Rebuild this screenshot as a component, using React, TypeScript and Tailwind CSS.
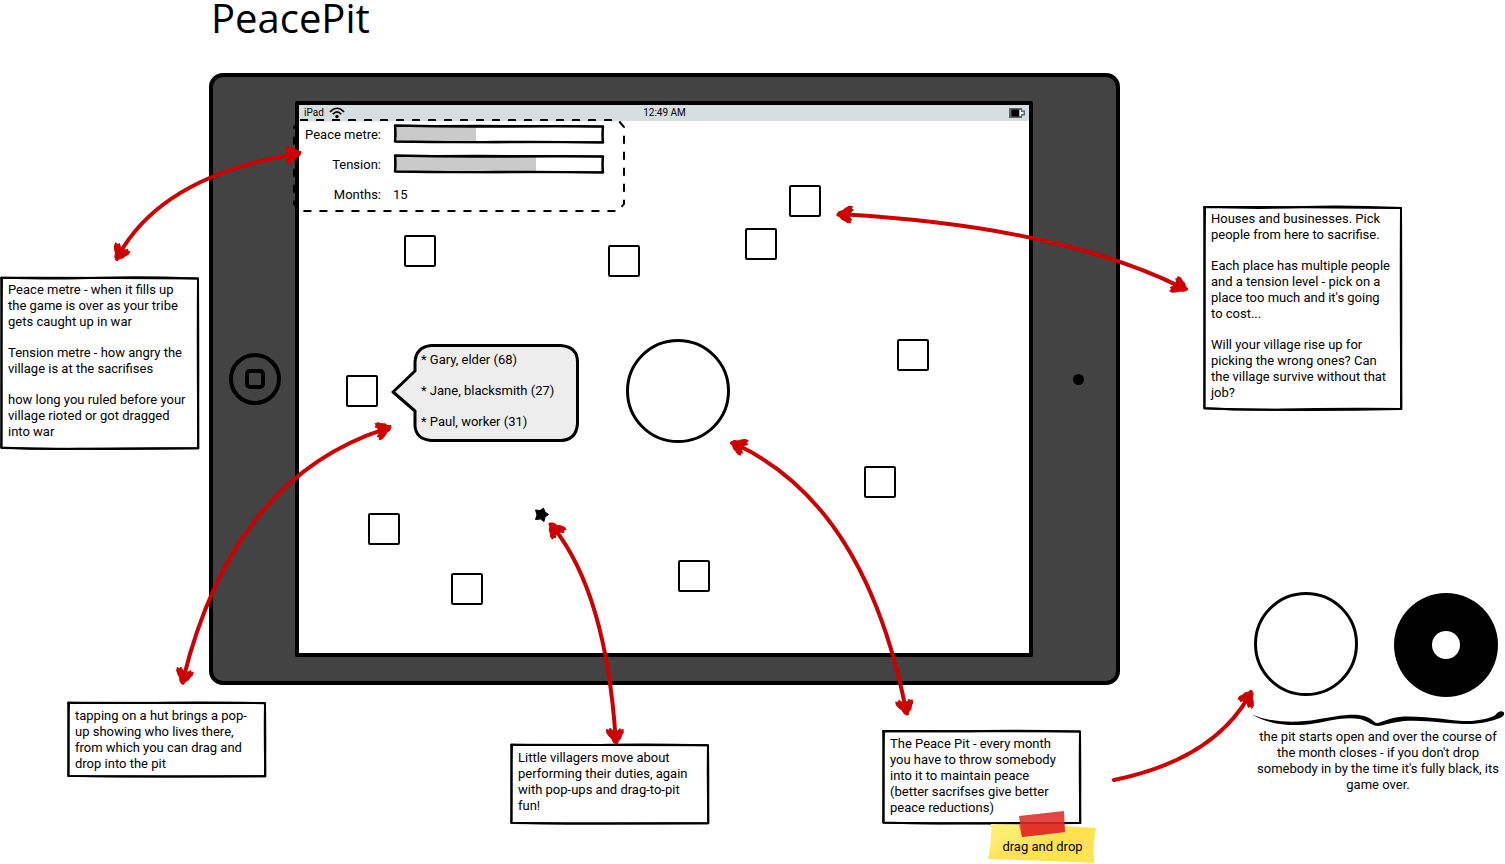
import type { ReactNode } from "react";

type Point = [number, number];

function RoughFrame({ fill = "none" }: { fill?: string }) {
  return (
    <svg
      className="absolute inset-0 h-full w-full overflow-visible"
      viewBox="0 0 100 100"
      preserveAspectRatio="none"
      fill="none"
      stroke="#000"
      strokeLinejoin="round"
      strokeLinecap="round"
      aria-hidden="true"
    >
      <path
        d="M.6 1 Q30 1.8 50 1 T99 1.5 Q98.7 45 99.2 99 Q60 98.8 40 99.3 T.6 98.5 Q1 60 .6 1Z"
        fill={fill}
        strokeWidth="2"
        vectorEffect="non-scaling-stroke"
      />
      <path
        d="M.6 1 Q45 .8 99 1.500 Q99.300 60 99 99 Q50 100 .8 98.800 Q.5 40 1 1"
        strokeWidth="2"
        vectorEffect="non-scaling-stroke"
      />
    </svg>
  );
}

function Lines({ paragraphs }: { paragraphs: string[][] }) {
  return (
    <div className="relative flex flex-col gap-[15px]">
      {paragraphs.map((lines, i) => (
        <p key={i}>
          {lines.map((line) => (
            <span key={line} className="block whitespace-nowrap">
              {line}
            </span>
          ))}
        </p>
      ))}
    </div>
  );
}

function Note({ place, paragraphs }: { place: string; paragraphs: string[][] }) {
  return (
    <section className={`absolute w-[200px] px-2 pt-[6px] ${place}`}>
      <RoughFrame fill="#fff" />
      <Lines paragraphs={paragraphs} />
    </section>
  );
}

function Meter({ label, value }: { label: string; value: number }) {
  return (
    <div
      role="progressbar"
      aria-label={label}
      aria-valuenow={value}
      className="relative h-5 w-[212px] bg-white p-[2px]"
    >
      <div className="h-full bg-[#cacaca]" style={{ width: `${value}%` }} />
      <svg
        className="absolute inset-0 h-full w-full"
        viewBox="0 0 212 20"
        fill="none"
        stroke="#000"
        strokeWidth="2.4"
        strokeLinejoin="round"
        aria-hidden="true"
      >
        <path d="M2 1.5 Q55 3 110 2.5 T210 2.5 Q209 10 210 18.500 Q150 17.500 105 18 T2 17.500 Q3 9 2 1.500Z" />
        <path d="M2 2 Q105 1 210 2.500 L209.500 18 Q105 19 2 17.500Z" strokeWidth="1.500" />
      </svg>
    </div>
  );
}

const houses: Point[] = [
  [105, 130],
  [309, 140],
  [490, 80],
  [446, 123],
  [47, 270],
  [598, 234],
  [565, 361],
  [69, 408],
  [152, 468],
  [379, 455],
];

function StatusBar() {
  return (
    <div className="grid h-4 grid-cols-3 items-center bg-[#d7dee1] pr-1 pl-[5px] text-[10px] leading-4">
      <span className="flex items-center gap-[5px]">
        iPad
        <svg width="16" height="12" viewBox="0 0 16 12" fill="none" stroke="#000" strokeWidth="1.700" aria-hidden="true">
          <path d="M1 5 Q8 -2.500 15 5" />
          <path d="M3.800 7.200 Q8 2.500 12.200 7.200" />
          <circle cx="8" cy="9.500" r="1.700" fill="#000" stroke="none" />
        </svg>
      </span>
      <span className="text-center">12:49 AM</span>
      <svg className="justify-self-end" width="16" height="10" viewBox="0 0 16 10" aria-hidden="true">
        <path d="M0 0h13v2.500h3v5h-3v2.500H0z" fill="#5f6568" />
        <path d="M2.500 1.500h7.500v7h-7.500z" fill="#000" />
        <path d="M10.500 2h1.500v2h2.500v2h-2.500v2h-1.500z" fill="#fff" />
      </svg>
    </div>
  );
}

function Popup() {
  return (
    <div className="absolute top-[239px] left-[92px] h-[98px] w-[188px] pt-[8px] pl-[30px]">
      <svg className="absolute inset-0 h-full w-full overflow-visible" viewBox="0 0 188 98" aria-hidden="true">
        <path
          d="M40 1.500H170Q186.500 3 186.500 18V80Q185 96 170 96.500H40Q25 95 24 82V67L2 48L24 27V18Q25 3 40 1.500Z"
          fill="#ededed"
          stroke="#000"
          strokeWidth="3"
          strokeLinejoin="round"
        />
      </svg>
      <Lines paragraphs={[["* Gary, elder (68)"], ["* Jane, blacksmith (27)"], ["* Paul, worker (31)"]]} />
    </div>
  );
}

function Tablet() {
  return (
    <main className="absolute top-[73px] left-[209px] flex w-[911px] rounded-[14px] border-4 border-black bg-[#434343] py-6">
      <div className="flex w-[82px] items-center justify-center pl-[2px]">
        <button
          aria-label="Home"
          className="flex h-[52px] w-[52px] items-center justify-center rounded-full border-4 border-black"
        >
          <span className="h-5 w-5 rounded-[5px] border-4 border-black" />
        </button>
      </div>
      <div className="flex-1 rounded-xs border-4 border-black bg-white">
        <StatusBar />
        <div className="relative h-[532px]">
          <dl className="grid grid-cols-[82px_1fr] gap-x-3 gap-y-1">
            <dt className="flex h-[26px] items-center justify-end pt-[2px] whitespace-nowrap">Peace metre:</dt>
            <dd className="flex items-center">
              <Meter label="Peace metre" value={39} />
            </dd>
            <dt className="flex h-[26px] items-center justify-end pt-[2px]">Tension:</dt>
            <dd className="flex items-center">
              <Meter label="Tension" value={68} />
            </dd>
            <dt className="flex h-[26px] items-center justify-end pt-[2px]">Months:</dt>
            <dd className="flex items-center pt-[2px]">15</dd>
          </dl>
          {/* Village map: each hut sits at its own spot */}
          <div className="absolute -top-4 left-0">
            {houses.map(([x, y], i) => (
              <button
                key={i}
                aria-label={`House ${i + 1}`}
                className="absolute h-8 w-8 rounded-[2px] border-2 border-black bg-white"
                style={{ left: x, top: y }}
              />
            ))}
            <div className="absolute top-[234px] left-[327px] h-[104px] w-[104px] rounded-full border-3 border-black" />
            <svg className="absolute top-[402px] left-[235px]" width="16" height="16" viewBox="0 0 16 16" aria-hidden="true">
              <path
                d="M14.500 7.500L11 10L10 14.500L6.500 12L1.500 12.500L3 8L1.500 3L6 3.500L9.500 1.200L11 5Z"
                stroke="#000"
                strokeLinejoin="round"
              />
            </svg>
            <Popup />
          </div>
        </div>
      </div>
      <div className="flex w-[83px] items-center justify-center pl-[7px]">
        <span className="h-[11px] w-[11px] rounded-full bg-black" />
      </div>
    </main>
  );
}

function ArrowHead({ tip, from }: { tip: Point; from: Point }) {
  const angle = (Math.atan2(from[1] - tip[1], from[0] - tip[0]) * 180) / Math.PI;
  return (
    <path
      transform={`translate(${tip[0]} ${tip[1]}) rotate(${angle})`}
      d="M0 0L2 -2.500L6 -4L8 -6L12 -8.500L15 -8.500L14 -6L16 -5L13 -2L13 3L15 5L13.500 6L14 8L11 8L8 6L5 5L3 2.500L0 1.500Z"
      fill="#cc0000"
      stroke="#cc0000"
      strokeLinejoin="round"
      strokeWidth="1"
    />
  );
}

function Arrow({ a, c, b, single = false }: { a: Point; c: Point; b: Point; single?: boolean }) {
  const inset = (p: Point): Point => {
    const dx = c[0] - p[0];
    const dy = c[1] - p[1];
    const len = Math.hypot(dx, dy);
    return [p[0] + (dx / len) * 6, p[1] + (dy / len) * 6];
  };
  const start = single ? a : inset(a);
  const end = inset(b);
  return (
    <g>
      <path
        d={`M${start[0]} ${start[1]}Q${c[0]} ${c[1]} ${end[0]} ${end[1]}`}
        fill="none"
        stroke="#cc0000"
        strokeWidth="4"
        strokeLinecap="round"
      />
      {!single && <ArrowHead tip={a} from={c} />}
      <ArrowHead tip={b} from={c} />
    </g>
  );
}

function Connectors() {
  return (
    <svg
      className="pointer-events-none absolute top-0 left-0"
      width="1505"
      height="864"
      viewBox="0 0 1505 864"
      aria-hidden="true"
    >
      <path
        d="M300 120H618L624 127V204L618 211H300L294 204V127Z"
        fill="none"
        stroke="#000"
        strokeWidth="2"
        strokeDasharray="8 8"
      />
      <Arrow a={[301, 153]} c={[163, 176]} b={[116, 260]} />
      <Arrow a={[837, 214]} c={[1060, 227]} b={[1187, 290]} />
      <Arrow a={[391, 427]} c={[233, 478]} b={[182, 684]} />
      <Arrow a={[550, 523]} c={[606, 594]} b={[616, 744]} />
      <Arrow a={[731, 442]} c={[865, 505]} b={[907, 715]} />
      <Arrow a={[1114, 780]} c={[1212, 760]} b={[1252, 691]} single />
    </svg>
  );
}

function PitStages({ children }: { children: ReactNode }) {
  return (
    <figure className="absolute top-[592px] left-[1252px] w-[252px]">
      <div className="flex justify-between pr-[6px] pl-[2px]">
        <div className="h-[104px] w-[104px] rounded-full border-3 border-black" />
        <div className="mt-px flex h-[104px] w-[104px] items-center justify-center rounded-full bg-black">
          <div className="h-7 w-7 rounded-full bg-white" />
        </div>
      </div>
      <svg className="mt-[13px] block" width="252" height="18" viewBox="0 0 252 18" aria-hidden="true">
        <path d="M0 4.500C20 13 45 13 65 9.500C85 6 100 3 112 6C120 8 122 13 125 13C129 13 138 7 152 6.500C180 6 205 12 220 11C235 9 243 7 245 3Q249 0 252 2.500Q253 6 248 8C240 11 230 13.500 218 14C195 14 175 9.500 152 11C138 12.500 130 16 126 16C120 16 116 11 108 9C92 6.500 80 10.500 62 13.500C40 17 18 15 0 4.500Z" />
      </svg>
      <figcaption className="pt-px text-center">{children}</figcaption>
    </figure>
  );
}

function StickyNote() {
  return (
    <div className="absolute top-[810px] left-[988px] flex h-[54px] w-[109px] items-end justify-center pb-[9px]">
      <svg className="absolute inset-0" width="109" height="54" viewBox="0 0 109 54" aria-hidden="true">
        <defs>
          <linearGradient id="paper" x1="0" y1="0" x2="1" y2="1">
            <stop offset="0" stopColor="#fff27a" />
            <stop offset=".35" stopColor="#ffe96a" />
            <stop offset=".5" stopColor="#ffe14f" />
            <stop offset="1" stopColor="#ffe358" />
          </linearGradient>
        </defs>
        <path d="M3 14L60 15L108 18Q105 32 106 53L60 51L0 49Q4 30 3 14Z" fill="url(#paper)" />
        <path d="M31 6L76 1L77 22L34 27Z" fill="#dc2a26" fillOpacity=".87" />
        <path d="M31 15L76 14L77 22L34 27Z" fill="#e52a22" fillOpacity=".6" />
      </svg>
      <span className="relative whitespace-nowrap">drag and drop</span>
    </div>
  );
}

export default function App() {
  return (
    <div className="relative min-h-screen bg-white font-['Roboto','Noto_Sans',sans-serif] text-[13px] leading-4 text-black">
      <h1 className="pl-[211px] font-['Open_Sans','Noto_Sans',sans-serif] text-[40px] leading-9">PeacePit</h1>
      <Tablet />
      <Note
        place="top-[276px] left-0 pb-[10px]"
        paragraphs={[
          ["Peace metre - when it fills up", "the game is over as your tribe", "gets caught up in war"],
          ["Tension metre - how angry the", "village is at the sacrifises"],
          ["how long you ruled before your", "village rioted or got dragged", "into war"],
        ]}
      />
      <Note
        place="top-[205px] left-[1203px] pb-[10px]"
        paragraphs={[
          ["Houses and businesses. Pick", "people from here to sacrifise."],
          ["Each place has multiple people", "and a tension level - pick on a", "place too much and it's going", "to cost..."],
          ["Will your village rise up for", "picking the wrong ones? Can", "the village survive without that", "job?"],
        ]}
      />
      <Note
        place="top-[702px] left-[67px] pb-[5px]"
        paragraphs={[
          ["tapping on a hut brings a pop-", "up showing who lives there,", "from which you can drag and", "drop into the pit"],
        ]}
      />
      <Note
        place="top-[744px] left-[510px] pb-[10px]"
        paragraphs={[
          ["Little villagers move about", "performing their duties, again", "with pop-ups and drag-to-pit", "fun!"],
        ]}
      />
      <Note
        place="top-[730px] left-[882px] pb-[8px]"
        paragraphs={[
          [
            "The Peace Pit - every month",
            "you have to throw somebody",
            "into it to maintain peace",
            "(better sacrifses give better",
            "peace reductions)",
          ],
        ]}
      />
      <PitStages>
        <Lines
          paragraphs={[
            [
              "the pit starts open and over the course of",
              "the month closes - if you don't drop",
              "somebody in by the time it's fully black, its",
              "game over.",
            ],
          ]}
        />
      </PitStages>
      <Connectors />
      <StickyNote />
    </div>
  );
}
